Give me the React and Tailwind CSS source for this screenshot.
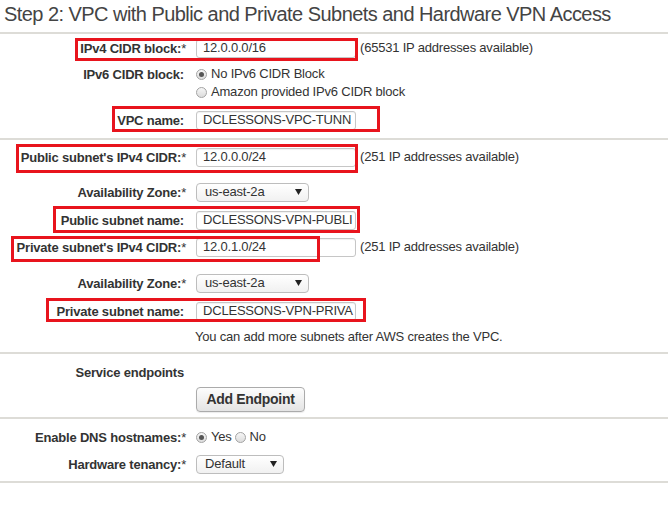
import React from "react";

const font = { fontFamily: '"Liberation Sans", Arial, Helvetica, sans-serif' };

function Label({ children, star, bold = true }) {
  return (
    <div className={`w-[184px] shrink-0 text-right text-[13px] leading-[15px] tracking-[-0.2px] text-[#333] ${bold ? "font-bold" : ""}`}>
      {children}
      {star && <span className="-mr-[2px] font-normal">*</span>}
    </div>
  );
}

function TextInput({ value }) {
  return (
    <div className="flex h-[19px] w-[160px] items-center overflow-hidden whitespace-nowrap rounded-[3px] border border-[#c6c6c6] bg-white pl-[6px] text-[13px] tracking-[-0.2px] text-[#333] shadow-[inset_0_1px_1px_rgba(0,0,0,0.06)]">
      {value}
    </div>
  );
}

function Select({ value, width }) {
  return (
    <div
      className={`flex h-[19px] ${width} items-center justify-between rounded-[4px] border border-[#bdbdbd] bg-gradient-to-b from-white to-[#f1f1f1] pl-[8px] pr-[6px] text-[13px] tracking-[-0.2px] text-[#333]`}
    >
      <span>{value}</span>
      <svg width="7" height="6" viewBox="0 0 7 6">
        <path d="M0 0 L7 0 L3.5 6 Z" fill="#222" />
      </svg>
    </div>
  );
}

function Radio({ checked }) {
  return (
    <span className="relative inline-flex h-[11px] w-[11px] shrink-0 items-center justify-center rounded-full border border-[#a3a3a3] bg-gradient-to-b from-[#f6f6f6] to-[#dcdcdc]">
      {checked && <span className="h-[5px] w-[5px] rounded-full bg-[#555]" />}
    </span>
  );
}

function Row({ className = "", children }) {
  return <div className={`flex items-center gap-[12px] ${className}`}>{children}</div>;
}

function Note({ children }) {
  return <span className="ml-[4px] text-[13px] tracking-[-0.2px] text-[#333]">{children}</span>;
}

function RedBox({ className }) {
  return <div className={`pointer-events-none absolute border-[3px] border-[#e8141d] ${className}`} />;
}

export default function App() {
  return (
    <div className="relative h-[511px] w-[668px] overflow-hidden bg-white" style={font}>
      <div className="h-[34px] border-b-2 border-[#dddcd7] pl-[4px] pt-[3px] text-[20px] leading-[23px] tracking-[-0.55px] text-[#444]">
        Step 2: VPC with Public and Private Subnets and Hardware VPN Access
      </div>

      <div className="border-b-2 border-[#dddcd7] pb-[8px]">
        <Row className="mt-[4px] h-[20px]">
          <Label star>IPv4 CIDR block:</Label>
          <div className="flex items-center">
            <TextInput value="12.0.0.0/16" />
            <Note>(65531 IP addresses available)</Note>
          </div>
        </Row>
        <Row className="mt-[7px] h-[18px]">
          <Label>IPv6 CIDR block:</Label>
          <div className="flex items-center gap-[4px] text-[13px] tracking-[-0.2px] text-[#333]">
            <Radio checked />
            <span>No IPv6 CIDR Block</span>
          </div>
        </Row>
        <Row className="h-[18px]">
          <div className="w-[184px] shrink-0" />
          <div className="flex items-center gap-[4px] text-[13px] tracking-[-0.2px] text-[#333]">
            <Radio />
            <span>Amazon provided IPv6 CIDR block</span>
          </div>
        </Row>
        <Row className="mt-[9px] h-[20px]">
          <Label>VPC name:</Label>
          <TextInput value="DCLESSONS-VPC-TUNN" />
        </Row>
      </div>

      <div className="border-b-2 border-[#dddcd7] pb-[7px]">
        <Row className="mt-[7px] h-[20px]">
          <Label star>Public subnet's IPv4 CIDR:</Label>
          <div className="flex items-center">
            <TextInput value="12.0.0.0/24" />
            <Note>(251 IP addresses available)</Note>
          </div>
        </Row>
        <Row className="mt-[15px] h-[20px]">
          <Label star>Availability Zone:</Label>
          <Select value="us-east-2a" width="w-[113px]" />
        </Row>
        <Row className="mt-[8px] h-[20px]">
          <Label>Public subnet name:</Label>
          <TextInput value="DCLESSONS-VPN-PUBLI" />
        </Row>
        <Row className="mt-[7px] h-[20px]">
          <Label star>Private subnet's IPv4 CIDR:</Label>
          <div className="flex items-center">
            <TextInput value="12.0.1.0/24" />
            <Note>(251 IP addresses available)</Note>
          </div>
        </Row>
        <Row className="mt-[16px] h-[20px]">
          <Label star>Availability Zone:</Label>
          <Select value="us-east-2a" width="w-[113px]" />
        </Row>
        <Row className="mt-[8px] h-[20px]">
          <Label>Private subnet name:</Label>
          <TextInput value="DCLESSONS-VPN-PRIVA" />
        </Row>
        <Row className="mt-[8px] h-[16px]">
          <div className="w-[184px] shrink-0" />
          <span className="-ml-[1px] text-[13px] tracking-[-0.2px] text-[#333]">You can add more subnets after AWS creates the VPC.</span>
        </Row>
      </div>

      <div className="border-b-2 border-[#dddcd7] pb-[5px]">
        <Row className="mt-[10px] h-[16px]">
          <Label>Service endpoints</Label>
        </Row>
        <Row className="mt-[7px] h-[25px]">
          <div className="w-[184px] shrink-0" />
          <button className="flex h-[25px] w-[109px] items-center justify-center rounded-[4px] border border-[#ababab] bg-gradient-to-b from-[#fdfdfd] to-[#e4e4e4] text-[14px] font-bold tracking-[-0.3px] text-[#333] shadow-[0_1px_1px_rgba(0,0,0,0.08)]">
            Add Endpoint
          </button>
        </Row>
      </div>

      <div className="border-b-2 border-[#dddcd7] pb-[7px]">
        <Row className="mt-[9px] h-[18px]">
          <Label star>Enable DNS hostnames:</Label>
          <div className="flex items-center text-[13px] tracking-[-0.2px] text-[#333]">
            <Radio checked />
            <span className="ml-[4px]">Yes</span>
            <span className="ml-[3px] flex"><Radio /></span>
            <span className="ml-[4px]">No</span>
          </div>
        </Row>
        <Row className="mt-[8px] h-[20px]">
          <Label star>Hardware tenancy:</Label>
          <Select value="Default" width="w-[88px]" />
        </Row>
      </div>

      <RedBox className="left-[75px] top-[38px] h-[23px] w-[283px]" />
      <RedBox className="left-[112px] top-[106px] h-[26px] w-[268px]" />
      <RedBox className="left-[16px] top-[144px] h-[29px] w-[342px]" />
      <RedBox className="left-[53px] top-[206px] h-[27px] w-[307px]" />
      <RedBox className="left-[11px] top-[236px] h-[26px] w-[309px]" />
      <RedBox className="left-[46px] top-[298px] h-[24px] w-[320px]" />
    </div>
  );
}
